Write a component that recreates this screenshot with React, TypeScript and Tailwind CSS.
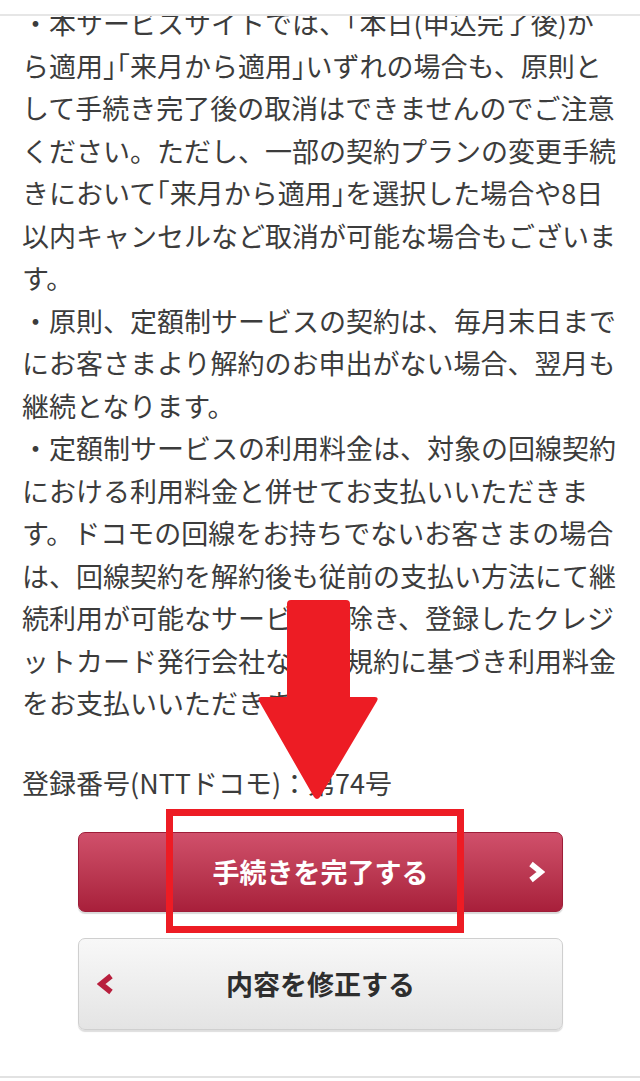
import React from "react";

const lines = [
  "・本サービスサイトでは、「本日(申込完了後)か",
  "ら適用」「来月から適用」いずれの場合も、原則と",
  "して手続き完了後の取消はできませんのでご注意",
  "ください。ただし、一部の契約プランの変更手続",
  "きにおいて「来月から適用」を選択した場合や8日",
  "以内キャンセルなど取消が可能な場合もございま",
  "す。",
  "・原則、定額制サービスの契約は、毎月末日まで",
  "にお客さまより解約のお申出がない場合、翌月も",
  "継続となります。",
  "・定額制サービスの利用料金は、対象の回線契約",
  "における利用料金と併せてお支払いいただきま",
  "す。ドコモの回線をお持ちでないお客さまの場合",
  "は、回線契約を解約後も従前の支払い方法にて継",
  "続利用が可能なサービスを除き、登録したクレジ",
  "ットカード発行会社などの規約に基づき利用料金",
  "をお支払いいただきます。",
];

// brackets are set half-width in the original
function Line({ text }: { text: string }) {
  const parts = text.split(/([「」])/);
  return (
    <div className="whitespace-nowrap">
      {parts.map((p, i) =>
        p === "「" || p === "」" ? (
          <span key={i} className="[font-feature-settings:'halt']">
            {p}
          </span>
        ) : (
          <React.Fragment key={i}>{p}</React.Fragment>
        )
      )}
    </div>
  );
}

function Chevron({ dir, color }: { dir: "left" | "right"; color: string }) {
  const points = dir === "right" ? "4,3 14,11 4,19" : "14,3 4,11 14,19";
  return (
    <svg width="18" height="22" viewBox="0 0 18 22" aria-hidden>
      <polyline
        points={points}
        fill="none"
        stroke={color}
        strokeWidth="5.5"
        strokeLinecap="butt"
        strokeLinejoin="miter"
      />
    </svg>
  );
}

export default function App() {
  return (
    <div
      className="relative h-[1081px] w-[640px] overflow-hidden bg-white text-[#3c3c3c]"
      style={{ fontFamily: '"Noto Sans CJK JP", "Noto Sans", sans-serif' }}
    >
      {/* notes */}
      <div className="px-[22px] pt-[2px] text-[27px] leading-[42.5px]">
        {lines.map((l, i) => (
          <Line key={i} text={l} />
        ))}
        <div className="mt-[37px] whitespace-nowrap">
          登録番号(NTTドコモ)：第74号
        </div>
      </div>

      {/* buttons */}
      <div className="mx-[78px] mt-[28px] flex w-[485px] flex-col gap-[26px]">
        <button
          type="button"
          className="relative flex h-[80px] items-center justify-center rounded-[7px] border border-[#9e1d38] bg-gradient-to-b from-[#d0506b] to-[#a81f3b] text-[27px] font-bold text-white shadow-[0_2px_1px_#d9d9d9]"
        >
          手続きを完了する
          <span className="absolute right-[17px] top-1/2 -translate-y-1/2">
            <Chevron dir="right" color="#ffffff" />
          </span>
        </button>
        <button
          type="button"
          className="relative flex h-[92px] items-center justify-center rounded-[7px] border border-[#cfcfcf] bg-gradient-to-b from-[#f8f8f8] to-[#e4e4e4] text-[27px] font-bold text-[#2e2e2e] shadow-[0_2px_1px_#dedede]"
        >
          <span className="absolute left-[18px] top-1/2 -translate-y-1/2">
            <Chevron dir="left" color="#b81f3d" />
          </span>
          内容を修正する
        </button>
      </div>

      <div className="mt-[46px] border-t-2 border-[#e2e2e2]" />

      {/* header edge */}
      <div className="absolute left-0 top-0 h-[16px] w-full border-b-2 border-[#e6e6e6] bg-white" />

      {/* annotation arrow */}
      <svg
        className="absolute left-[258px] top-[600px]"
        width="120"
        height="200"
        viewBox="0 0 120 200"
        aria-hidden
      >
        <path
          d="M33 0 H88 Q92 0 92 4 V97 H117 Q121 97 119 101 L62 197 Q59 201 56 197 L1 101 Q-1 97 3 97 H29 V4 Q29 0 33 0 Z"
          fill="#ed1c24"
        />
      </svg>

      {/* annotation box */}
      <div className="absolute left-[166px] top-[809px] h-[124px] w-[298px] border-[7px] border-[#ed1c24]" />
    </div>
  );
}
